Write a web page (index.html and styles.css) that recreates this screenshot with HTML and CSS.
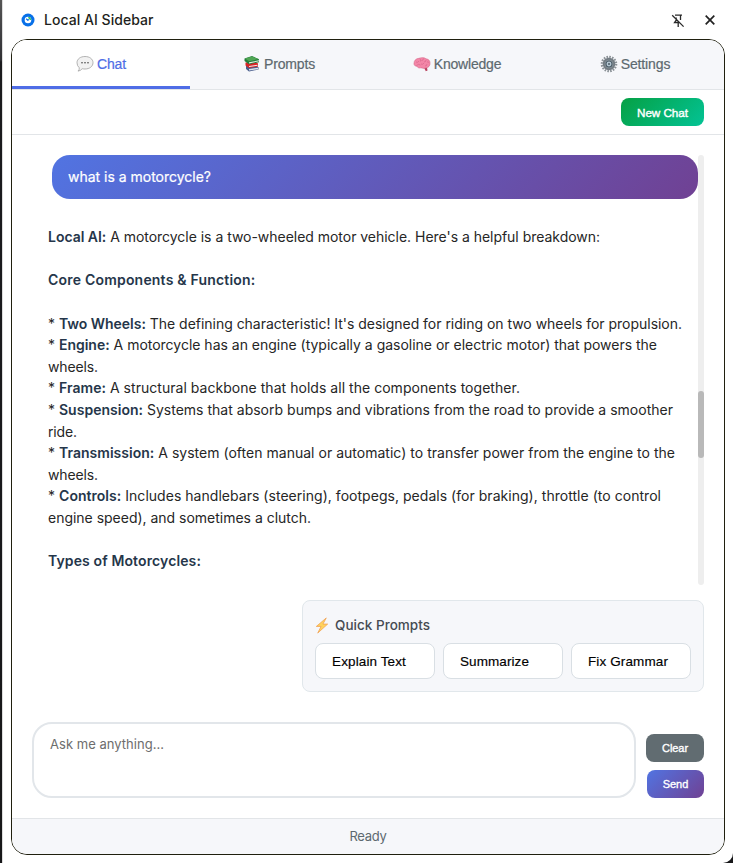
FILE: index.html
```html
<!DOCTYPE html>
<html lang="en">
<head>
<meta charset="utf-8">
<title>Local AI Sidebar</title>
<link rel="stylesheet" href="styles.css">
</head>
<body>
<div class="window">
  <header class="titlebar">
    <svg class="logo" viewBox="0 0 14 14"><circle cx="7" cy="7" r="6.5" fill="#0870e8"/><circle cx="7" cy="7" r="3.3" fill="#fff"/><path d="M5.200 5.700 6.800 7.200 8 6.500" fill="none" stroke="#0870e8" stroke-width="1.2"/><path d="M7.3 4.6a2.500 2.500 0 0 1 2.2 2.200" fill="none" stroke="#22b65b" stroke-width="1.500"/></svg>
    <h1><span class="fit" data-w="109.500">Local AI Sidebar</span></h1>
    <svg class="pin" viewBox="0 0 14 14" fill="none" stroke="#2a2a2a" stroke-width="1.3"><path d="M4 1.200h7M5.200 3.500V6L3.500 8.500h5.200M9.500 1.200V6M7.200 8.500V13M1.2 1.2l11.400 11.400"/></svg>
    <svg class="close" viewBox="0 0 10 10" stroke="#222" stroke-width="1.7"><path d="m.7.7 8.6 8.6M9.3.7.7 9.3"/></svg>
  </header>
  <main class="panel">
    <nav class="tabs">
      <a class="tab active"><svg viewBox="0 0 18 18"><path d="M9 1.5c4.7 0 8 2.6 8 6.2s-3.300 6.300-8 6.300q-1.500 0-2.800-.3-1.500 2.100-4.200 2.400 1.500-1.400 1.300-3.300Q1 10.900 1 7.700C1 4.100 4.300 1.500 9 1.500Z" fill="#f2f2f2" stroke="#aaa" stroke-width=".9"/><g fill="#444"><circle cx="6" cy="7.700" r=".8"/><circle cx="9" cy="7.700" r=".8"/><circle cx="12" cy="7.700" r=".8"/></g></svg><span class="fit" data-w="29">Chat</span></a>
      <a class="tab"><svg viewBox="0 0 18 18"><path d="m3 11 10-1 2.500 2.500v2L6 16.500l-3-2.500Z" fill="#4a5f8d"/><path d="m6 14 9-1.300v1.500L6 15.500Z" fill="#dfe3ec"/><path d="m2.500 7.500 9-1 3.500 2v3L6 13l-3.500-2.500Z" fill="#d82427"/><path d="m6 11 8.500-1.300v1L6 12Z" fill="#eee"/><path d="M1.500 3.500 9 1l7 3.200v3L6 9.300 1.500 6Z" fill="#257d3c"/><path d="m6 7.300 10-2v1L6 8.400Z" fill="#e4eee4"/><path d="m2 3.600 7-2.200 6.500 2.700L6 6.200Z" fill="#4fa653"/></svg><span class="fit" data-w="51">Prompts</span></a>
      <a class="tab"><svg viewBox="0 0 18 18"><path d="M11 12.500h3l.5 3-1.700.8Z" fill="#b8405d"/><path d="M1 8.500c0-3 2-5 5-5.200 3-1.200 6-.6 7 .5 3 .4 4 2.400 4 4.200.2 2.800-1.500 4.800-4 4.800-2 1.200-4 .2-5 0-2 .5-3.500-.3-4-1.500C1.500 11 1 10 1 8.500Z" fill="#f386a7" stroke="#d8668a" stroke-width=".6"/><path d="M3 7q2 1 3-1M6.500 3.700q2 .8 1 2.800M10.500 3.500q0 2-2 2M13 5q0 2-2 2M3.500 10.500q2-2 4-.5M8 9q2 1 3-1M12 11q2 0 2-2M14 7q1-.5 2 .5" fill="none" stroke="#cf6085" stroke-width=".55"/></svg><span class="fit" data-w="67.500">Knowledge</span></a>
      <a class="tab"><svg viewBox="0 0 18 18"><circle cx="9" cy="9" r="7.200" fill="none" stroke="#8b9297" stroke-width="2.200" stroke-dasharray="1.600 1.230"/><circle cx="9" cy="9" r="5.300" fill="#8c979e" stroke="#737c83" stroke-width="1.900"/><circle cx="9" cy="9" r="3" fill="#b6c8d4" stroke="#4e5f6a" stroke-width="1.100"/><circle cx="9" cy="9" r="1.100" fill="#53636d"/></svg><span class="fit" data-w="49.500">Settings</span></a>
    </nav>
    <div class="toolbar"><button class="new"><span class="fit" data-w="51">New Chat</span></button></div>
    <section class="chat">
      <div class="messages">
        <div class="question"><span class="fit" data-w="143">what is a motorcycle?</span></div>
        <div class="answer">
          <p><span class="fit" data-w="552"><b>Local AI:</b> A motorcycle is a two-wheeled motor vehicle. Here's a helpful breakdown:</span></p>
          <p class="gap"></p>
          <p><b class="fit" data-w="207.500">Core Components &amp; Function:</b></p>
          <p class="gap"></p>
          <p><span class="fit" data-w="634">* <b>Two Wheels:</b> The defining characteristic! It's designed for riding on two wheels for propulsion.</span></p>
          <p><span class="fit" data-w="609">* <b>Engine:</b> A motorcycle has an engine (typically a gasoline or electric motor) that powers the</span></p>
          <p><span class="fit" data-w="50">wheels.</span></p>
          <p><span class="fit" data-w="472">* <b>Frame:</b> A structural backbone that holds all the components together.</span></p>
          <p><span class="fit" data-w="625">* <b>Suspension:</b> Systems that absorb bumps and vibrations from the road to provide a smoother</span></p>
          <p><span class="fit" data-w="29">ride.</span></p>
          <p><span class="fit" data-w="627">* <b>Transmission:</b> A system (often manual or automatic) to transfer power from the engine to the</span></p>
          <p><span class="fit" data-w="50">wheels.</span></p>
          <p><span class="fit" data-w="613">* <b>Controls:</b> Includes handlebars (steering), footpegs, pedals (for braking), throttle (to control</span></p>
          <p><span class="fit" data-w="263">engine speed), and sometimes a clutch.</span></p>
          <p class="gap"></p>
          <p><b class="fit" data-w="153">Types of Motorcycles:</b></p>
        </div>
      </div>
      <div class="track"><div class="thumb"></div></div>
    </section>
    <section class="quick">
      <h2><svg viewBox="0 0 14 18"><path d="M11.500 1 1 10h5l-3.500 7L13 7.500H8Z" fill="#ffd35c" stroke="#f0a050" stroke-width=".8"/></svg><span class="fit" data-w="95">Quick Prompts</span></h2>
      <div class="choices"><button><span class="fit" data-w="74">Explain Text</span></button><button><span class="fit" data-w="69">Summarize</span></button><button><span class="fit" data-w="80">Fix Grammar</span></button></div>
    </section>
    <section class="composer">
      <div class="input"><span class="fit" data-w="114">Ask me anything...</span></div>
      <div class="actions"><button class="clear"><span class="fit" data-w="26">Clear</span></button><button class="send"><span class="fit" data-w="25.500">Send</span></button></div>
    </section>
    <footer><span class="fit" data-w="37">Ready</span></footer>
  </main>
</div>
<script src="script.js"></script>
</body>
</html>
```
FILE: styles.css
```css
* { box-sizing: border-box; }
body { margin: 0; width: 733px; height: 863px; overflow: hidden; background: linear-gradient(#555 0, #303034 60px, #1b1b1e 62px, #171719 100%); font-family: Inter, "Liberation Sans", sans-serif; color: #24282b; }
h1, h2, p { margin: 0; }
button { font-family: "Liberation Sans", Arial, sans-serif; padding: 0; border: 0; }
.window { height: 863px; margin-left: 2px; padding: 0 8px 8px 9px; background: #fff; border-left: 1px solid #ddd; border-radius: 0 0 10px 0; }
.titlebar { height: 39px; display: flex; align-items: center; padding: 0 10px 0 9px; }
.logo { width: 14px; height: 14px; margin-right: 9px; }
h1 { font-size: 14px; line-height: 20px; font-weight: 500; color: #1e1f20; flex: 1; }
.pin { width: 14px; height: 14px; margin: 2px 20px 0 0; }
.close { width: 10px; height: 10px; }
.panel { width: 714px; height: 816px; margin-left: -1px; border: 1px solid #20200f; border-radius: 16px; overflow: hidden; display: flex; flex-direction: column; background: #fff; }
.tabs { height: 50px; flex: none; display: flex; background: #f6f7fa; border-bottom: 1px solid #e2e5e8; }
.tab { flex: 1; display: flex; justify-content: center; align-items: center; gap: 3px; padding-top: 2px; font: 14px "Liberation Sans", Arial, sans-serif; color: #5d696f; border-bottom: 3px solid transparent; -webkit-text-stroke: .2px currentColor; }
.tab svg { width: 18px; height: 18px; -webkit-text-stroke: 0; }
.tab.active { background: #fff; color: #4f6de6; border-bottom-color: #4f6de6; }
.toolbar { height: 45px; flex: none; display: flex; align-items: center; justify-content: flex-end; padding-right: 20px; border-bottom: 1px solid #e2e5e8; }
.new { width: 83px; height: 28px; border-radius: 8px; background: linear-gradient(135deg, #05a044, #03c395); color: #fff; font-size: 11.700px; -webkit-text-stroke: .4px #fff; }
.chat { height: 430px; margin: 20px 20px 0; flex: none; display: flex; }
.messages { width: 666px; }
.question { margin-left: 20px; height: 44px; border-radius: 18px; padding: 0 16px; line-height: 44px; font-size: 14px; color: #fff; background: linear-gradient(135deg, #5174e2, #704193); -webkit-text-stroke: .2px #fff; }
.answer { padding: 27.200px 0 0 16px; font-size: 14px; line-height: 21.600px; color: #262626; white-space: nowrap; }
.answer p { height: 21.600px; }
.answer b { font-weight: 600; color: #25364a; }
.fit { display: inline-block; white-space: nowrap; }
.track { width: 6px; border-radius: 3px; background: #eee; }
.thumb { height: 67px; margin-top: 236px; border-radius: 3px; background: #b9b9b9; }
.quick { width: 402px; height: 92px; flex: none; margin: 15px 20px 0 auto; padding: 12px; border: 1px solid #e1e7eb; border-radius: 8px; background: #f6f7fa; }
h2 { height: 24px; display: flex; align-items: center; gap: 6px; font-size: 13.500px; font-weight: 550; color: #454b52; margin-bottom: 6px; }
h2 svg { width: 14px; height: 17px; }
.choices { display: flex; gap: 8px; }
.choices button { flex: 1; height: 36px; padding-left: 16px; text-align: left; background: #fff; border: 1px solid #d9dfe4; border-radius: 8px; font-size: 13.500px; color: #000; -webkit-text-stroke: .15px #000; }
.composer { height: 126px; flex: none; display: flex; gap: 10px; padding: 30px 20px 0; }
.input { width: 604px; height: 76px; border: 2px solid #e2e6ea; border-radius: 20px; padding: 10px 16px; font-size: 13px; line-height: 20px; color: #6d6d6d; }
.actions { display: flex; flex-direction: column; align-items: flex-end; gap: 8px; padding-top: 12px; }
.actions button { height: 28px; border-radius: 8px; color: #fff; font-size: 11px; -webkit-text-stroke: .35px #fff; }
.actions .clear { width: 58px; background: #616c71; }
.actions .send { width: 57px; background: linear-gradient(135deg, #5174e2, #704193); }
footer { flex: 1; border-top: 1px solid #e2e5e8; background: #f6f7fa; text-align: center; color: #5d696f; font-size: 13px; line-height: 35px; }
```
FILE: script.js
```js
// Spread letters so every line keeps its design width.
document.fonts.ready.then(() => {
  document.querySelectorAll('.fit').forEach((line) => {
    const spare = Number(line.dataset.w) - line.getBoundingClientRect().width;
    line.style.letterSpacing = spare / line.textContent.length + 'px';
  });
});
```
